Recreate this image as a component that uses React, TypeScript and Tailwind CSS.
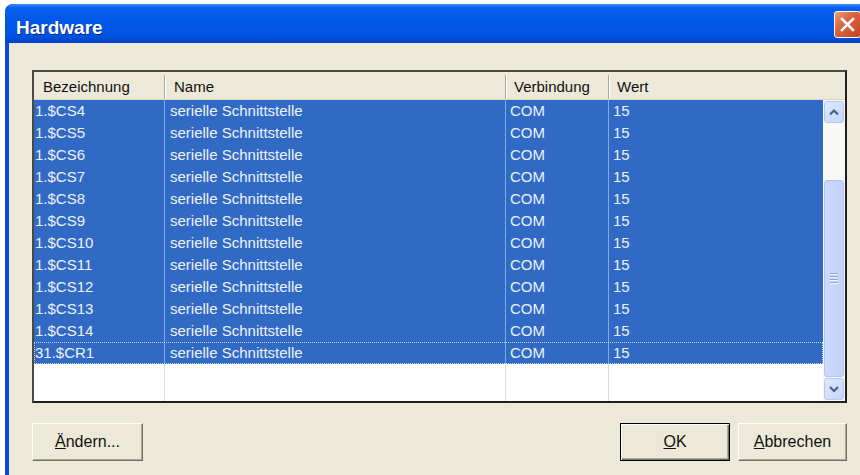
import React from 'react';

type Row = { id: string; name: string; conn: string; value: string };

const rows: Row[] = [
  ...Array.from({ length: 11 }, (_, i) => ({
    id: `1.$CS${i + 4}`,
    name: 'serielle Schnittstelle',
    conn: 'COM',
    value: '15',
  })),
  { id: '31.$CR1', name: 'serielle Schnittstelle', conn: 'COM', value: '15' },
];

const columns = ['Bezeichnung', 'Name', 'Verbindung', 'Wert'];

const TitleBar = () => (
  <div className="h-[39px] shrink-0 flex items-start justify-between pl-[11px] pr-[8px] bg-[linear-gradient(to_bottom,#3d8ef9_0%,#0b60ee_9%,#0058e8_45%,#0054e2_80%,#0043cc_100%)]">
    <span className="mt-[13px] text-[19px] leading-[22px] font-bold text-white [text-shadow:1px_1px_0_#0c2a8c]">
      Hardware
    </span>
    <button className="mt-[7px] w-[27px] h-[27px] rounded-[3px] border border-white flex items-center justify-center bg-[linear-gradient(135deg,#ee9a7c_0%,#da6540_40%,#c5441f_100%)]">
      <svg width="15" height="15" viewBox="0 0 15 15">
        <path d="M2 2 L13 13 M13 2 L2 13" stroke="#fff" strokeWidth="2.6" strokeLinecap="square" />
      </svg>
    </button>
  </div>
);

const Chevron = ({ up }: { up?: boolean }) => (
  <svg width="12" height="10" viewBox="0 0 12 10">
    <path
      d={up ? 'M2 7.5 L6 3.5 L10 7.5' : 'M2 3 L6 7 L10 3'}
      fill="none"
      stroke="#4d6185"
      strokeWidth="2.2"
    />
  </svg>
);

const ScrollButton = ({ up }: { up?: boolean }) => (
  <div className="w-[20px] h-[22px] shrink-0 rounded-[3px] border border-[#b5c7f2] bg-[linear-gradient(135deg,#e1eafe_0%,#c4d4fb_100%)] flex items-center justify-center">
    <Chevron up={up} />
  </div>
);

const ScrollBar = () => (
  <div className="w-[22px] shrink-0 bg-[#f8f8f5] flex flex-col items-center py-[1px]">
    <ScrollButton up />
    <div className="h-[57px] shrink-0" />
    <div className="w-[20px] h-[197px] shrink-0 rounded-[3px] border border-[#b0c3f0] bg-[linear-gradient(to_right,#cad9fd_0%,#c1d2fc_100%)] flex flex-col items-center justify-center gap-[1px]">
      {[0, 1, 2, 3].map((i) => (
        <div key={i} className="w-[8px] h-[2px] border-t border-[#8ea6e2] border-b border-b-[#eef3ff]" />
      ))}
    </div>
    <div className="flex-1" />
    <ScrollButton />
  </div>
);

const GridRow = ({ row, focused }: { row: Row; focused?: boolean }) => (
  <div
    className={
      focused
        ? 'h-[22px] flex bg-[#316ac5] text-[#eef2fb] text-[15px] leading-[22px] outline-1 outline-dotted outline-[#c5d5f3] -outline-offset-1'
        : 'h-[22px] flex bg-[#316ac5] text-[#eef2fb] text-[15px] leading-[22px]'
    }
  >
    <div className="w-[131px] shrink-0 border-r border-[#86a8e6] pl-[1px]">{row.id}</div>
    <div className="w-[341px] shrink-0 border-r border-[#86a8e6] pl-[5px]">{row.name}</div>
    <div className="w-[103px] shrink-0 border-r border-[#86a8e6] pl-[4px]">{row.conn}</div>
    <div className="flex-1 pl-[4px]">{row.value}</div>
  </div>
);

const Grid = () => (
  <div className="w-[815px] h-[333px] bg-white border-2 border-t-[#4a4944] border-l-[#4a4944] border-r-[#202020] border-b-[#202020] flex flex-col">
    <div className="h-[28px] shrink-0 flex bg-[#ece9d8] border-b border-[#d6d2c2] pt-[3px] text-[15px] text-[#111]">
      {columns.map((c, i) => (
        <div
          key={c}
          className={
            i === 0
              ? 'w-[131px] shrink-0 flex items-center pl-[9px] border-r border-[#aca899] shadow-[1px_0_0_#fff]'
              : i === 1
              ? 'w-[341px] shrink-0 flex items-center pl-[9px] border-r border-[#aca899] shadow-[1px_0_0_#fff]'
              : i === 2
              ? 'w-[103px] shrink-0 flex items-center pl-[8px] border-r border-[#aca899] shadow-[1px_0_0_#fff]'
              : 'flex-1 flex items-center pl-[8px]'
          }
        >
          {c}
        </div>
      ))}
    </div>
    <div className="flex-1 flex min-h-0">
      <div className="flex-1 flex flex-col">
        {rows.map((r, i) => (
          <GridRow key={r.id} row={r} focused={i === rows.length - 1} />
        ))}
        {/* empty row below the last entry */}
        <div className="flex-1 flex">
          <div className="w-[131px] shrink-0 border-r border-[#dcdcdc]" />
          <div className="w-[341px] shrink-0 border-r border-[#dcdcdc]" />
          <div className="w-[103px] shrink-0 border-r border-[#dcdcdc]" />
          <div className="flex-1" />
        </div>
      </div>
      <ScrollBar />
    </div>
  </div>
);

const DialogButton = ({
  width,
  isDefault,
  children,
}: {
  width: string;
  isDefault?: boolean;
  children: React.ReactNode;
}) => (
  <button
    className={
      isDefault
        ? `${width} h-[38px] bg-[#ece9d8] border border-black shadow-[inset_1px_1px_0_#fff,inset_-1px_-1px_0_#716f64,inset_-2px_-2px_0_#aca899] text-[16px] text-[#111] flex items-center justify-center`
        : `${width} h-[38px] bg-[#ece9d8] border border-t-white border-l-white border-r-[#716f64] border-b-[#716f64] shadow-[inset_-1px_-1px_0_#aca899] text-[16px] text-[#111] flex items-center justify-center`
    }
  >
    {children}
  </button>
);

export default function App() {
  return (
    <div className="w-[860px] h-[475px] bg-white overflow-hidden font-['Liberation_Sans',Arial,sans-serif]">
      <div className="ml-[5px] mt-[4px] w-[864px] h-[480px] rounded-t-[8px] overflow-hidden bg-[#0a4ad8] flex flex-col">
        <TitleBar />
        <div className="flex-1 mx-[4px] bg-[#ece9d8] pl-[23px] pt-[27px]">
          <Grid />
          <div className="w-[815px] mt-[20px] flex justify-between">
            <DialogButton width="w-[111px]">
              <span>
                <span className="underline">Ä</span>ndern...
              </span>
            </DialogButton>
            <div className="flex gap-[8px]">
              <DialogButton width="w-[110px]" isDefault>
                <span>
                  <span className="underline">O</span>K
                </span>
              </DialogButton>
              <DialogButton width="w-[109px]">
                <span>
                  <span className="underline">A</span>bbrechen
                </span>
              </DialogButton>
            </div>
          </div>
        </div>
      </div>
    </div>
  );
}
